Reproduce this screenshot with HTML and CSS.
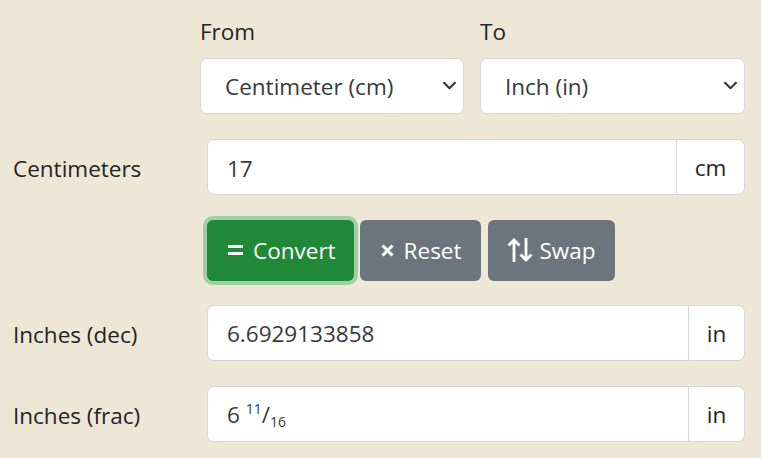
FILE: index.html
```html
<!DOCTYPE html>
<html lang="en">
<head>
    <meta charset="UTF-8">
    <title>Length Converter</title>
    <link rel="stylesheet" href="styles.css">
</head>
<body>
    <form class="converter">
        <div class="unit-row">
            <div class="unit-col">
                <label for="fromUnit">From</label>
                <select id="fromUnit" class="form-select">
                    <option>Centimeter (cm)</option>
                </select>
            </div>
            <div class="unit-col">
                <label for="toUnit">To</label>
                <select id="toUnit" class="form-select">
                    <option>Inch (in)</option>
                </select>
            </div>
        </div>

        <div class="field-row">
            <label for="valueIn" class="field-label">Centimeters</label>
            <div class="input-group">
                <input id="valueIn" type="text" value="17">
                <span class="addon">cm</span>
            </div>
        </div>

        <div class="button-row">
            <button type="button" class="btn btn-green">
                <svg class="icon" width="15" height="10" viewBox="0 0 15 10" fill="#fff">
                    <rect x="0" y="0" width="15" height="3"/>
                    <rect x="0" y="7" width="15" height="3"/>
                </svg>
                Convert
            </button>
            <button type="button" class="btn btn-gray">
                <svg class="icon" width="13" height="13" viewBox="0 0 13 13" fill="none" stroke="#fff" stroke-width="3">
                    <path d="M1.5 1.5l10 10M11.5 1.5l-10 10"/>
                </svg>
                Reset
            </button>
            <button type="button" class="btn btn-gray">
                <svg class="icon" width="26" height="24" viewBox="0 0 26 24" fill="none" stroke="#fff" stroke-width="2.8">
                    <path d="M7 24V2M1.5 7.5L7 2l5.5 5.5"/>
                    <path d="M19 0v22M13.5 16.5L19 22l5.5-5.5"/>
                </svg>
                Swap
            </button>
        </div>

        <div class="field-row result-row">
            <label class="field-label">Inches (dec)</label>
            <div class="input-group">
                <div class="output">6.6929133858</div>
                <span class="addon addon-in">in</span>
            </div>
        </div>

        <div class="field-row">
            <label class="field-label">Inches (frac)</label>
            <div class="input-group">
                <div class="output">6 <sup>11</sup>/<sub>16</sub></div>
                <span class="addon addon-in">in</span>
            </div>
        </div>
    </form>
</body>
</html>
```

FILE: styles.css
```css
/* Base */
body {
    margin: 0;
    background: #efe7d5;
    color: #212529;
    font-family: 'Open Sans', 'Noto Sans', sans-serif;
    font-size: 22.5px;
    line-height: 1.5;
}

.converter {
    padding: 15px 16px 16px 13px;
}

/* From / To selects */
.unit-row {
    display: grid;
    grid-template-columns: 264px 1fr;
    gap: 16px;
    margin-left: 187px;
}

.unit-col label {
    display: block;
    margin-bottom: 9px;
}

.form-select {
    display: block;
    width: 100%;
    height: 56px;
    padding: 3px 40px 0 24px;
    font: inherit;
    color: #343a40;
    background: #fff url("data:image/svg+xml,%3csvg xmlns='http://www.w3.org/2000/svg' viewBox='0 0 12 8'%3e%3cpath fill='none' stroke='%23343a40' stroke-linecap='round' stroke-linejoin='round' stroke-width='2' d='M1 1.5l5 5 5-5'/%3e%3c/svg%3e") no-repeat right 7px center / 13px 9px;
    border: 1px solid #d4d7da;
    border-radius: 7px;
    appearance: none;
}

/* Input rows */
.field-row {
    display: flex;
    align-items: center;
    margin-top: 25px;
}

.result-row {
    margin-top: 24px;
}

.field-label {
    width: 194px;
    flex-shrink: 0;
    padding-top: 4px;
}

.input-group {
    flex: 1;
    display: flex;
    height: 56px;
}

.input-group input,
.output {
    flex: 1;
    min-width: 0;
    box-sizing: border-box;
    height: 56px;
    padding: 3px 19px 0;
    font: inherit;
    color: #343a40;
    background: #fff;
    border: 1px solid #d4d7da;
    border-radius: 7px 0 0 7px;
    outline: none;
}

.output {
    line-height: 50px;
    white-space: pre;
}

.output sup,
.output sub {
    font-size: 14px;
    line-height: 0;
}

.output sup {
    vertical-align: 9px;
}

.output sub {
    vertical-align: -4px;
}

.addon {
    width: 68px;
    display: flex;
    align-items: center;
    justify-content: center;
    padding-top: 3px;
    background: #fff;
    border: 1px solid #d4d7da;
    border-left: none;
    border-radius: 0 7px 7px 0;
    box-sizing: border-box;
}

.addon-in {
    width: 56px;
}

/* Buttons */
.button-row {
    display: flex;
    gap: 6px;
    margin: 25px 0 0 194px;
}

.btn {
    display: inline-flex;
    align-items: center;
    gap: 10px;
    height: 61px;
    padding: 2px 19px 0 21px;
    font: inherit;
    color: #fff;
    border: none;
    border-radius: 6px;
    cursor: pointer;
}

.btn .icon {
    display: block;
    margin-top: -2px;
}

.btn-green {
    background: #218838;
    box-shadow: 0 0 0 4px #9dd0a5;
    padding-right: 18px;
}

.btn-gray {
    background: #6c757d;
}

.btn-gray + .btn-gray {
    margin-left: 1px;
    gap: 7px;
    padding-left: 19px;
}
```
